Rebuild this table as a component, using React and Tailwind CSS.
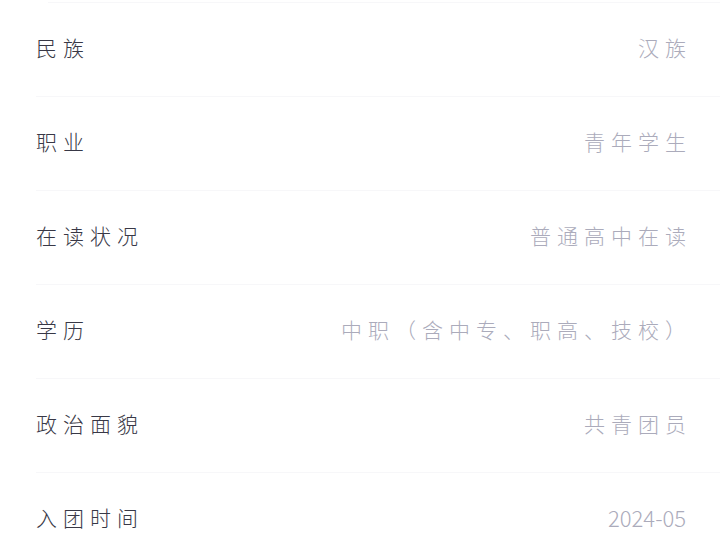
import React from 'react';

const rows = [
    {label: '民族', value: '汉族'},
    {label: '职业', value: '青年学生'},
    {label: '在读状况', value: '普通高中在读'},
    {label: '学历', value: '中职（含中专、职高、技校）'},
    {label: '政治面貌', value: '共青团员'},
    {label: '入团时间', value: '2024-05', number: true},
];

const App = () => {
    return (
        <div
            className="w-[720px] h-[535px] overflow-hidden bg-white"
            style={{fontFamily: '"Noto Sans CJK SC", "Noto Sans", sans-serif'}}
        >
            <div className="h-[1px] ml-[48px] mt-[2px] bg-[#f7f7f9]" />
            {rows.map((row) => (
                <div
                    key={row.label}
                    className="ml-[36px] h-[94px] flex items-center justify-between border-b border-[#f7f7f9] pr-[28px] pb-[4px]"
                >
                    <span className="text-[21px] font-light tracking-[6px] text-[#383846]">
                        {row.label}
                    </span>
                    <span
                        className={
                            row.number
                                ? 'text-[22px] font-light tracking-[0px] pr-[6px] text-[#ababbb]'
                                : 'text-[21px] font-light tracking-[6px] text-[#ababbb]'
                        }
                    >
                        {row.value}
                    </span>
                </div>
            ))}
        </div>
    );
};

export default App;
